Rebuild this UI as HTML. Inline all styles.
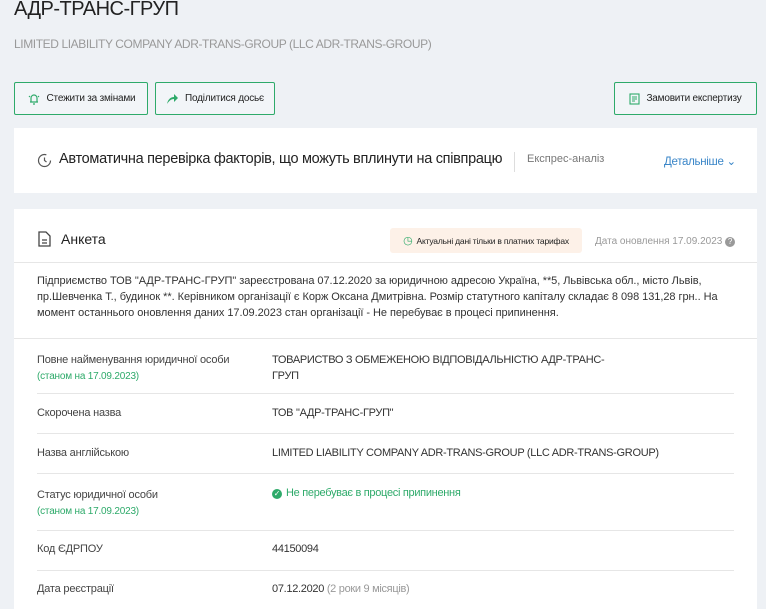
<!DOCTYPE html>
<html><head><meta charset="utf-8"><style>
*{margin:0;padding:0;box-sizing:border-box}
body{width:766px;height:599px;overflow:hidden;background:#eef1f5;font-family:"Liberation Sans",sans-serif;color:#333;position:relative}
.abs{position:absolute}
.btn{position:absolute;top:82px;height:33px;border:1px solid #2eaa6a;border-radius:2px;background:#f2f5f8;font-size:10px;color:#222;display:flex;align-items:center;justify-content:center;gap:6px;letter-spacing:-0.2px}
.card{position:absolute;left:14px;width:743px;background:#fff}
.lbl{position:absolute;left:37px;font-size:11px;color:#444;letter-spacing:-0.2px}
.val{position:absolute;left:272px;font-size:11px;color:#333;letter-spacing:-0.3px}
.sub{color:#2eaa6a}
.sep{position:absolute;left:37px;width:697px;height:1px;background:#e6e6e6}
</style></head><body>
<div class="abs" style="left:14px;top:-2px;font-size:20px;color:#222;letter-spacing:-0.5px">АДР-ТРАНС-ГРУП</div>
<div class="abs" style="left:14px;top:37px;font-size:12px;color:#999;letter-spacing:-0.4px">LIMITED LIABILITY COMPANY ADR-TRANS-GROUP (LLC ADR-TRANS-GROUP)</div>
<div class="btn" style="left:14px;width:134px"><svg width="14" height="14" viewBox="0 0 14 14" fill="none" stroke="#2eaa6a" stroke-width="1.2"><path d="M4 10V6a3 3 0 016 0v4M3 10h8M6 12h2M2 4l1 1M12 4l-1 1"/></svg>Стежити за змінами</div>
<div class="btn" style="left:155px;width:120px"><svg width="13" height="12" viewBox="0 0 13 12"><path d="M1 11C2 6 5 4 8 4V1l4 4-4 4V6C5 6 3 8 1 11z" fill="#2eaa6a"/></svg>Поділитися досьє</div>
<div class="btn" style="left:614px;width:143px"><svg width="11" height="12" viewBox="0 0 11 12" fill="none" stroke="#2eaa6a" stroke-width="1.1"><rect x="1" y="1" width="9" height="10"/><path d="M3 4h5M3 6h5M3 8h3"/></svg>Замовити експертизу</div>
<div class="card" style="top:128px;height:65px">
<svg class="abs" style="left:23px;top:25px" width="15" height="15" viewBox="0 0 15 15" fill="none" stroke="#555" stroke-width="1.2"><circle cx="7.5" cy="7.5" r="6" stroke-dasharray="30 8"/><path d="M7.5 4.5v3l2 1.5"/></svg>
<div class="abs" style="left:45px;top:23px;font-size:14.5px;color:#222;letter-spacing:-0.3px">Автоматична перевірка факторів, що можуть вплинути на співпрацю</div>
<div class="abs" style="left:500px;top:24px;width:1px;height:20px;background:#ddd"></div>
<div class="abs" style="left:513px;top:25px;font-size:11px;color:#777">Експрес-аналіз</div>
<div class="abs" style="left:650px;top:26px;font-size:11.5px;color:#3a86c8;letter-spacing:-0.3px">Детальніше ⌄</div>
</div>
<div class="card" style="top:209px;height:400px">
<svg class="abs" style="left:24px;top:22px" width="13" height="16" viewBox="0 0 13 16" fill="none" stroke="#444" stroke-width="1.3"><path d="M1 1h7l4 4v10H1z"/><path d="M4 9h5M4 12h5"/></svg>
<div class="abs" style="left:47px;top:22px;font-size:14px;color:#222">Анкета</div>
<div class="abs" style="left:376px;top:19px;width:192px;height:25px;background:#fdf1e8;border-radius:3px;font-size:8.5px;color:#222;display:flex;align-items:center;justify-content:center;gap:4px;letter-spacing:-0.2px"><span style="color:#2eaa6a;font-size:11px">◷</span>Актуальні дані тільки в платних тарифах</div>
<div class="abs" style="left:581px;top:27px;font-size:10px;color:#999">Дата оновлення 17.09.2023 <span style="display:inline-block;width:10px;height:10px;border-radius:50%;background:#999;color:#fff;font-size:8px;text-align:center;line-height:10px">?</span></div>
<div class="abs" style="left:0;top:53px;width:743px;height:1px;background:#e6e6e6"></div>
<div class="abs" style="left:23px;top:64px;width:700px;font-size:11px;line-height:16px;color:#333;letter-spacing:-0.05px">Підприємство ТОВ "АДР-ТРАНС-ГРУП" зареєстрована 07.12.2020 за юридичною адресою Україна, **5, Львівська обл., місто Львів,<br>пр.Шевченка Т., будинок **. Керівником організації є Корж Оксана Дмитрівна. Розмір статутного капіталу складає 8 098 131,28 грн.. На<br>момент останнього оновлення даних 17.09.2023 стан організації - Не перебуває в процесі припинення.</div>
<div class="abs" style="left:0;top:129px;width:743px;height:1px;background:#e6e6e6"></div>
</div>
<div class="lbl" style="top:352px;line-height:16px">Повне найменування юридичної особи<br><span class="sub" style="font-size:10px">(станом на 17.09.2023)</span></div>
<div class="val" style="top:352px;line-height:16px">ТОВАРИСТВО З ОБМЕЖЕНОЮ ВІДПОВІДАЛЬНІСТЮ АДР-ТРАНС-<br>ГРУП</div>
<div class="sep" style="top:393px"></div>
<div class="lbl" style="top:407px">Скорочена назва</div>
<div class="val" style="top:407px">ТОВ "АДР-ТРАНС-ГРУП"</div>
<div class="sep" style="top:433px"></div>
<div class="lbl" style="top:447px">Назва англійською</div>
<div class="val" style="top:447px">LIMITED LIABILITY COMPANY ADR-TRANS-GROUP (LLC ADR-TRANS-GROUP)</div>
<div class="sep" style="top:473px"></div>
<div class="lbl" style="top:487px;line-height:16px">Статус юридичної особи<br><span class="sub" style="font-size:10px">(станом на 17.09.2023)</span></div>
<div class="val" style="top:487px;color:#2eaa6a"><span style="display:inline-block;width:10px;height:10px;border-radius:50%;background:#2eaa6a;color:#fff;font-size:8px;text-align:center;line-height:10px;margin-right:4px">✓</span>Не перебуває в процесі припинення</div>
<div class="sep" style="top:530px"></div>
<div class="lbl" style="top:543px">Код ЄДРПОУ</div>
<div class="val" style="top:543px">44150094</div>
<div class="sep" style="top:570px"></div>
<div class="lbl" style="top:583px">Дата реєстрації</div>
<div class="val" style="top:583px">07.12.2020 <span style="color:#999">(2 роки 9 місяців)</span></div>
</body></html>
